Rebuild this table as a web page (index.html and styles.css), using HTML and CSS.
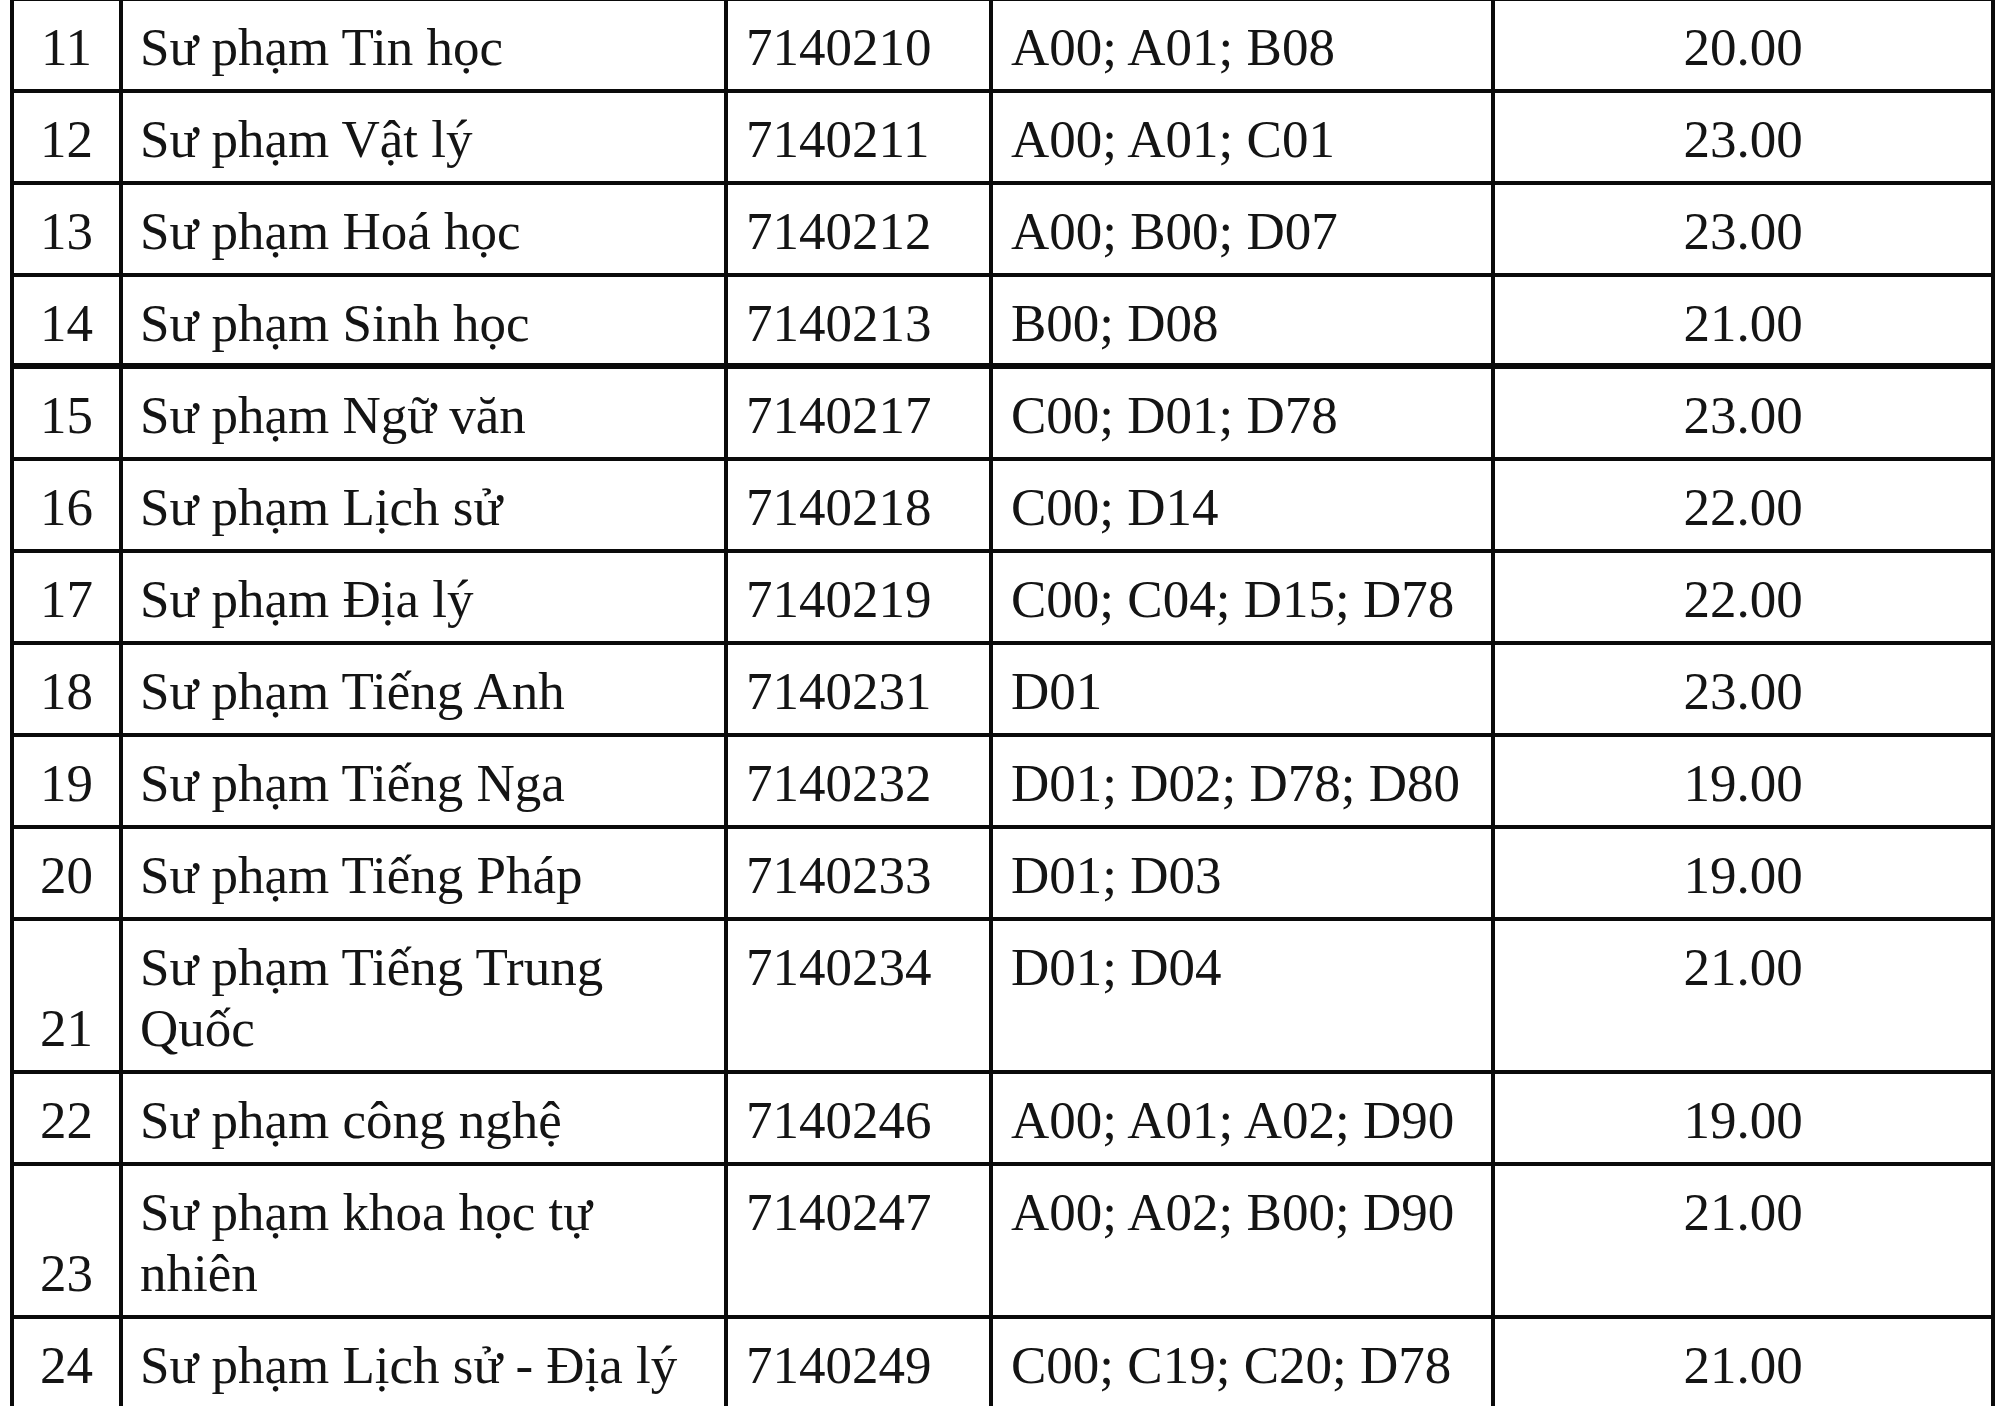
FILE: index.html
```html
<!DOCTYPE html>
<html lang="vi">
<head>
<meta charset="utf-8">
<title>Bảng điểm</title>
<link rel="stylesheet" href="styles.css">
</head>
<body>
<div class="sheet">
  <div class="c num">11</div><div class="c name">Sư phạm Tin học</div><div class="c code">7140210</div><div class="c subj">A00; A01; B08</div><div class="c score">20.00</div>
  <div class="c num">12</div><div class="c name">Sư phạm Vật lý</div><div class="c code">7140211</div><div class="c subj">A00; A01; C01</div><div class="c score">23.00</div>
  <div class="c num">13</div><div class="c name">Sư phạm Hoá học</div><div class="c code">7140212</div><div class="c subj">A00; B00; D07</div><div class="c score">23.00</div>
  <div class="c num thick">14</div><div class="c name thick">Sư phạm Sinh học</div><div class="c code thick">7140213</div><div class="c subj thick">B00; D08</div><div class="c score thick">21.00</div>
  <div class="c num">15</div><div class="c name">Sư phạm Ngữ văn</div><div class="c code">7140217</div><div class="c subj">C00; D01; D78</div><div class="c score">23.00</div>
  <div class="c num">16</div><div class="c name">Sư phạm Lịch sử</div><div class="c code">7140218</div><div class="c subj">C00; D14</div><div class="c score">22.00</div>
  <div class="c num">17</div><div class="c name">Sư phạm Địa lý</div><div class="c code">7140219</div><div class="c subj">C00; C04; D15; D78</div><div class="c score">22.00</div>
  <div class="c num">18</div><div class="c name">Sư phạm Tiếng Anh</div><div class="c code">7140231</div><div class="c subj">D01</div><div class="c score">23.00</div>
  <div class="c num">19</div><div class="c name">Sư phạm Tiếng Nga</div><div class="c code">7140232</div><div class="c subj">D01; D02; D78; D80</div><div class="c score">19.00</div>
  <div class="c num">20</div><div class="c name">Sư phạm Tiếng Pháp</div><div class="c code">7140233</div><div class="c subj">D01; D03</div><div class="c score">19.00</div>
  <div class="c num">21</div><div class="c name">Sư phạm Tiếng Trung<br>Quốc</div><div class="c code">7140234</div><div class="c subj">D01; D04</div><div class="c score">21.00</div>
  <div class="c num">22</div><div class="c name">Sư phạm công nghệ</div><div class="c code">7140246</div><div class="c subj">A00; A01; A02; D90</div><div class="c score">19.00</div>
  <div class="c num">23</div><div class="c name">Sư phạm khoa học tự<br>nhiên</div><div class="c code">7140247</div><div class="c subj">A00; A02; B00; D90</div><div class="c score">21.00</div>
  <div class="c num">24</div><div class="c name">Sư phạm Lịch sử - Địa lý</div><div class="c code">7140249</div><div class="c subj">C00; C19; C20; D78</div><div class="c score">21.00</div>
</div>
</body>
</html>
```

FILE: styles.css
```css
html, body {
  margin: 0;
  padding: 0;
  background: #ffffff;
  overflow: hidden;
}

body {
  width: 2000px;
  height: 1406px;
  font-family: "Liberation Serif", "Times New Roman", serif;
  color: #141414;
}

.sheet {
  display: grid;
  grid-template-columns: 109px 605px 265px 502px 500px;
  width: max-content;
  margin: -3px 0 0 10px;
  border-left: 4px solid #0a0a0a;
  border-top: 4px solid #0a0a0a;
}

.c {
  border-right: 4px solid #0a0a0a;
  border-bottom: 4px solid #0a0a0a;
  padding: 16px 0 11px 18px;
  font-size: 53px;
  line-height: 61px;
  white-space: nowrap;
}

.c.thick {
  border-bottom-width: 6px;
  padding-bottom: 9px;
}

.num {
  padding-left: 0;
  display: flex;
  flex-direction: column;
  justify-content: flex-end;
  align-items: center;
}

.name {
  padding-left: 17px;
}

.score {
  padding-left: 0;
  text-align: center;
}
```
